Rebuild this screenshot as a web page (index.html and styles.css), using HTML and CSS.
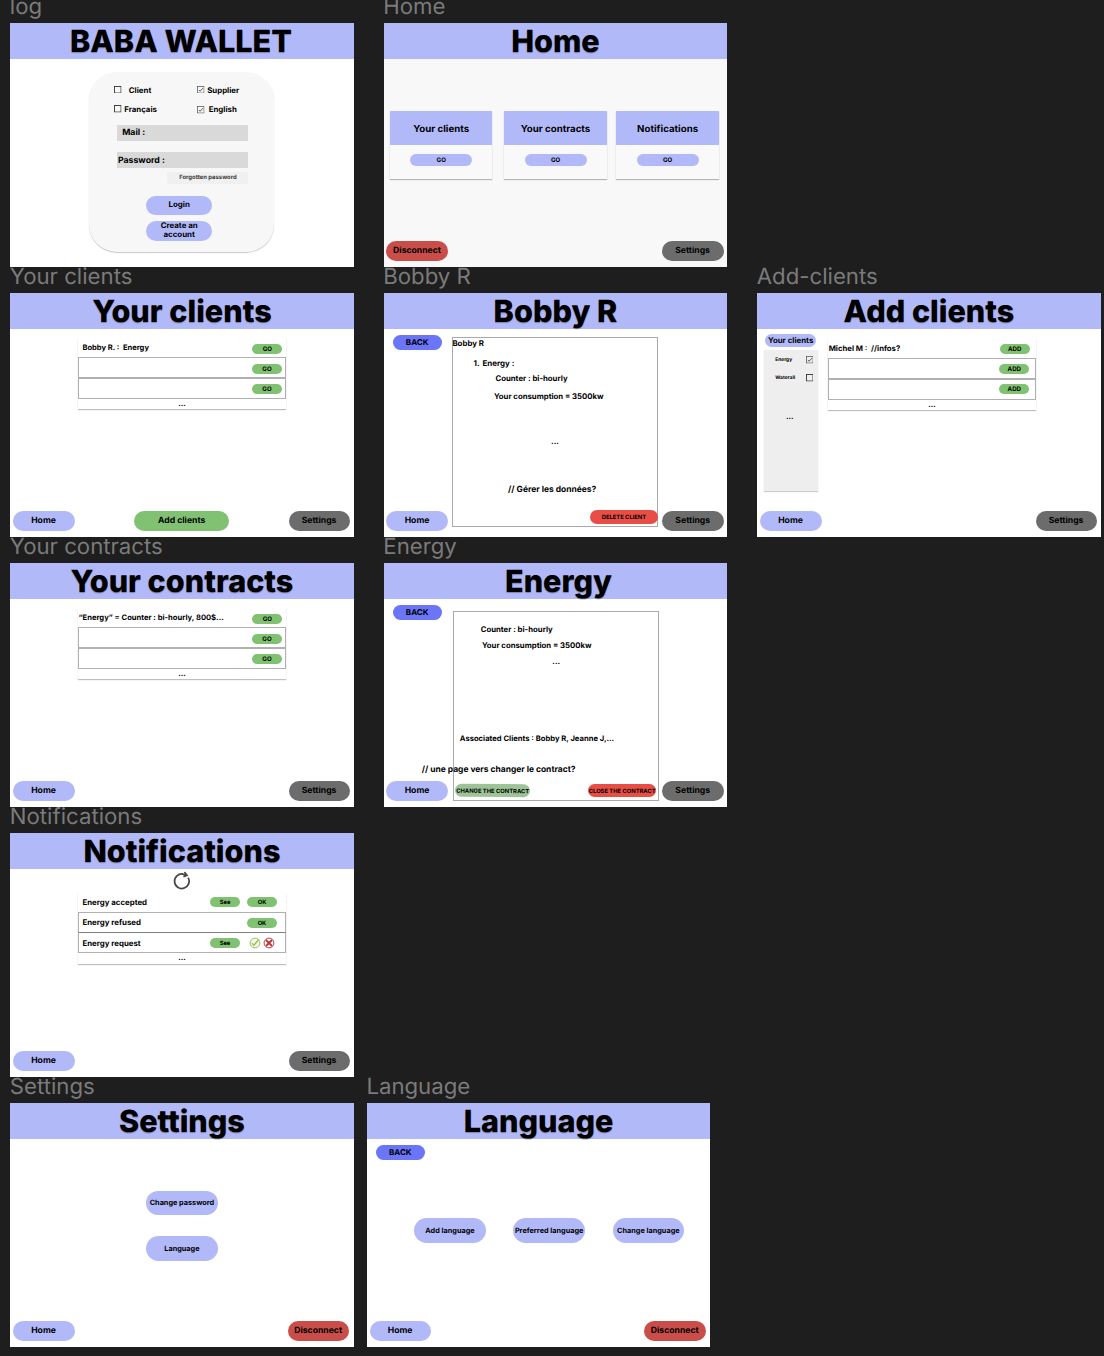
FILE: index.html
```html
<!DOCTYPE html>
<html lang="en">
<head>
<meta charset="utf-8">
<title>Baba Wallet</title>
<link rel="stylesheet" href="styles.css">
</head>
<body>
<svg width="0" height="0" class="defs">
  <symbol id="box" viewBox="0 0 8 8"><rect x=".5" y=".5" width="7" height="7" fill="none" stroke="#333" stroke-width=".95"/></symbol>
  <symbol id="boxed" viewBox="0 0 8 8"><rect x=".5" y=".5" width="7" height="7" fill="none" stroke="#555" stroke-width=".8"/><path d="M1.9 4.2 3.3 5.6 6.2 2.4" fill="none" stroke="#222" stroke-width=".8"/></symbol>
</svg>
<main class="board">
  <div class="row">
    <section class="screen">
      <h2 class="label">log</h2>
      <div class="frame">
        <h1 class="title shift-left">BABA WALLET</h1>
        <form class="login">
          <div class="checks">
            <svg class="check"><use href="#box"/></svg><span class="client">Client</span>
            <svg class="check"><use href="#boxed"/></svg><span>Supplier</span>
            <svg class="check"><use href="#box"/></svg><span>Français</span>
            <svg class="check low"><use href="#boxed"/></svg><span class="english">English</span>
          </div>
          <div class="field mail">Mail :</div>
          <div class="field password">Password :</div>
          <div class="forgot">Forgotten password</div>
          <div class="pill signin">Login</div>
          <div class="pill create">Create an<br>account</div>
        </form>
      </div>
    </section>
    <section class="screen">
      <h2 class="label">Home</h2>
      <div class="frame soft">
        <h1 class="title">Home</h1>
        <div class="cards">
          <div class="card"><h3>Your clients</h3><div class="pill card-go">GO</div></div>
          <div class="card"><h3>Your contracts</h3><div class="pill card-go">GO</div></div>
          <div class="card"><h3>Notifications</h3><div class="pill card-go">GO</div></div>
        </div>
        <footer class="foot"><div class="pill nav red">Disconnect</div><div class="pill nav grey">Settings</div></footer>
      </div>
    </section>
  </div>

  <div class="row">
    <section class="screen">
      <h2 class="label">Your clients</h2>
      <div class="frame">
        <h1 class="title">Your clients</h1>
        <div class="list">
          <div class="item first"><span class="name">Bobby R. :&nbsp; Energy</span><div class="pill mini">GO</div></div>
          <div class="item lined"><div class="pill mini">GO</div></div>
          <div class="item lined"><div class="pill mini">GO</div></div>
          <div class="more">...</div>
        </div>
        <footer class="foot"><div class="pill nav">Home</div><div class="pill nav green">Add clients</div><div class="pill nav grey">Settings</div></footer>
      </div>
    </section>
    <section class="screen">
      <h2 class="label">Bobby R</h2>
      <div class="frame">
        <h1 class="title">Bobby R</h1>
        <div class="detail">
          <div class="side"><div class="pill back">BACK</div><div class="pill nav">Home</div></div>
          <div class="panel client-panel">
            <p class="text who">Bobby R</p>
            <p class="text topic"><span>1.</span>Energy :</p>
            <p class="text counter">Counter : bi-hourly</p>
            <p class="text usage">Your consumption = 3500kw</p>
            <p class="text dots">...</p>
            <p class="text note">// Gérer les données?</p>
            <div class="pill action delete">DELETE CLIENT</div>
          </div>
          <div class="side end"><div class="pill nav grey">Settings</div></div>
        </div>
      </div>
    </section>
    <section class="screen">
      <h2 class="label">Add-clients</h2>
      <div class="frame">
        <h1 class="title">Add clients</h1>
        <div class="browse">
          <aside class="filters">
            <div class="pill tab">Your clients</div>
            <div class="filter-box">
              <div class="filter">Energy<svg class="check"><use href="#boxed"/></svg></div>
              <div class="filter">Waterall<svg class="check"><use href="#box"/></svg></div>
              <div class="filter-more">...</div>
            </div>
          </aside>
          <div class="list add-list">
            <div class="item first"><span class="name">Michel M :&nbsp; //infos?</span><div class="pill mini">ADD</div></div>
            <div class="item lined"><div class="pill mini">ADD</div></div>
            <div class="item lined"><div class="pill mini">ADD</div></div>
            <div class="more">...</div>
          </div>
        </div>
        <footer class="foot"><div class="pill nav">Home</div><div class="pill nav grey">Settings</div></footer>
      </div>
    </section>
  </div>

  <div class="row">
    <section class="screen">
      <h2 class="label">Your contracts</h2>
      <div class="frame">
        <h1 class="title">Your contracts</h1>
        <div class="list contracts">
          <div class="item first"><span class="name">“Energy” = Counter : bi-hourly, 800$...</span><div class="pill mini">GO</div></div>
          <div class="item lined"><div class="pill mini">GO</div></div>
          <div class="item lined"><div class="pill mini">GO</div></div>
          <div class="more">...</div>
        </div>
        <footer class="foot"><div class="pill nav">Home</div><div class="pill nav grey">Settings</div></footer>
      </div>
    </section>
    <section class="screen">
      <h2 class="label">Energy</h2>
      <div class="frame">
        <h1 class="title shift-right">Energy</h1>
        <div class="detail">
          <div class="side"><div class="pill back">BACK</div><div class="pill nav">Home</div></div>
          <div class="panel contract-panel">
            <p class="text counter">Counter : bi-hourly</p>
            <p class="text usage">Your consumption = 3500kw</p>
            <p class="text dots">...</p>
            <p class="text clients">Associated Clients : Bobby R, Jeanne J,...</p>
            <p class="text note">// une page vers changer le contract?</p>
            <div class="actions">
              <div class="pill action change">CHANGE THE CONTRACT</div>
              <div class="pill action close">CLOSE THE CONTRACT</div>
            </div>
          </div>
          <div class="side end"><div class="pill nav grey">Settings</div></div>
        </div>
      </div>
    </section>
  </div>

  <div class="row">
    <section class="screen">
      <h2 class="label">Notifications</h2>
      <div class="frame">
        <h1 class="title">Notifications</h1>
        <svg class="refresh" viewBox="0 0 20 20"><path d="M11 3A7.3 7.3 0 1 0 16.2 6.6" fill="none" stroke="#484848" stroke-width="1.8"/><path d="M10.2 3 14.6 4.2M12.4.9 15 4.4 11.4 5.6" fill="none" stroke="#484848" stroke-width="1.7"/></svg>
        <div class="list notices">
          <div class="item first"><span class="name">Energy accepted</span><div class="pill mini">See</div><div class="pill mini">OK</div></div>
          <div class="item lined"><span class="name">Energy refused</span><div class="pill mini">OK</div></div>
          <div class="item lined"><span class="name">Energy request</span><div class="pill mini">See</div>
            <div class="verdict">
              <svg viewBox="0 0 12 12"><circle cx="6" cy="6" r="4.9" fill="#f5f9ea" stroke="#a3b86c" stroke-width="1"/><path d="M2.9 6.3 4.9 8.3 9.8 2.4" fill="none" stroke="#8fc63d" stroke-width="1.4"/></svg>
              <svg viewBox="0 0 12 12"><circle cx="6" cy="6" r="4.9" fill="#fff" stroke="#a94a4a" stroke-width="1"/><path d="M3 3 9 9M9 3 3 9" fill="none" stroke="#c62f35" stroke-width="1.8"/></svg>
            </div>
          </div>
          <div class="more">...</div>
        </div>
        <footer class="foot"><div class="pill nav">Home</div><div class="pill nav grey">Settings</div></footer>
      </div>
    </section>
  </div>

  <div class="row narrow">
    <section class="screen">
      <h2 class="label">Settings</h2>
      <div class="frame">
        <h1 class="title">Settings</h1>
        <div class="stack"><div class="pill option">Change password</div><div class="pill option">Language</div></div>
        <footer class="foot out"><div class="pill nav">Home</div><div class="pill nav red">Disconnect</div></footer>
      </div>
    </section>
    <section class="screen">
      <h2 class="label">Language</h2>
      <div class="frame">
        <h1 class="title">Language</h1>
        <div class="pill back">BACK</div>
        <div class="options"><div class="pill option">Add language</div><div class="pill option">Preferred language</div><div class="pill option">Change language</div></div>
        <footer class="foot out"><div class="pill nav">Home</div><div class="pill nav red">Disconnect</div></footer>
      </div>
    </section>
  </div>
</main>
</body>
</html>
```
FILE: styles.css
```css
* { box-sizing: border-box; margin: 0; padding: 0; }

html { background: #1e1e1e; }

body {
  height: 1356px;
  overflow: hidden;
  background: #1e1e1e;
  color: #000;
  font-family: Inter, "Liberation Sans", sans-serif;
  font-weight: 700;
  text-rendering: geometricPrecision;
}

svg { display: block; flex: none; }
.defs { display: none; }

/* canvas */
.board { margin-top: -3px; padding-left: 10.2px; }
.row { display: flex; gap: 30px; height: 270px; }
.row.narrow { gap: 13.1px; }
.screen { width: 343.5px; flex: none; }
.label {
  height: 26px;
  margin-left: -.4px;
  font-size: 22.2px;
  font-weight: 400;
  line-height: 20px;
  color: #7b7b7b;
  white-space: nowrap;
}
.frame {
  display: flex;
  flex-direction: column;
  height: 244px;
  background: #fff;
}
.frame.soft { background: #f8f8f8; }
.title {
  height: 36px;
  flex: none;
  background: #b2b9f8;
  font-size: 30.6px;
  font-weight: 800;
  line-height: 38px;
  text-align: center;
  text-shadow: 0 1px 1px rgba(0, 0, 0, .3);
}
.title.shift-left { padding-right: 2px; }
.title.shift-right { padding-left: 6px; }

/* buttons */
.pill {
  display: flex;
  align-items: center;
  justify-content: center;
  flex: none;
  border-radius: 20px;
  background: #b2b9f8;
  text-align: center;
  white-space: nowrap;
}
.nav { width: 61.8px; height: 20px; padding: 0 .7px 1px 0; font-size: 8.65px; line-height: 10px; }
.back { width: 49px; height: 15px; margin: 6px 0 0 9px; padding-bottom: 1px; background: #6a75f8; font-size: 8px; line-height: 10px; }
.red { background: #c94d48; }
.grey { background: #6c6c6c; }
.nav.green { width: 95px; padding-right: 0; background: #80c272; }

.foot {
  display: flex;
  justify-content: space-between;
  margin-top: auto;
  padding: 0 3.4px 6px 2.8px;
}
.foot.out { padding-right: 4.3px; }

/* login */
.login {
  display: flex;
  flex-direction: column;
  width: 185px;
  height: 180px;
  margin: 13px 0 0 79px;
  border-radius: 28px;
  background: #f7f7f7;
  box-shadow: 0 1px 1px rgba(0, 0, 0, .22);
}
.checks {
  display: grid;
  grid-template-columns: 10px 73px 10px 50px;
  grid-auto-rows: 19.3px;
  align-items: center;
  height: 39px;
  margin: 8px 0 0 25px;
  font-size: 7.85px;
  line-height: 10px;
}
.check { width: 7.5px; height: 7.5px; }
.check.low { margin-top: 2.5px; }
.client { padding-left: 4.6px; }
.english { padding-left: 1.5px; }
.field {
  width: 131px;
  margin-left: 28px;
  background: #d9d9d9;
  font-size: 8.75px;
}
.mail { height: 16px; margin-top: 6px; padding-left: 5px; line-height: 16.5px; }
.password { height: 15.5px; margin-top: 11.3px; padding-left: .7px; line-height: 18px; }
.forgot {
  width: 81px;
  height: 11.3px;
  margin: 4.7px 0 0 77.5px;
  padding: 1px 0 0 1.5px;
  background: #f0f0f0;
  color: #3a3a3a;
  font-size: 5.92px;
  line-height: 10px;
  text-align: center;
}
.signin, .create { width: 65.4px; margin-left: 57.3px; font-size: 7.9px; line-height: 9.2px; }
.signin { height: 18.7px; margin-top: 12.3px; padding-bottom: 1.5px; }
.create { height: 20.3px; margin-top: 6px; padding-bottom: 2.4px; }

/* home cards */
.cards { display: flex; margin: 51.7px 0 0 6.4px; }
.card {
  width: 102.3px;
  height: 68.5px;
  background: #f9f9f9;
  box-shadow: 0 1px 1px rgba(0, 0, 0, .27);
}
.card:nth-child(2) { margin: 0 9.8px 0 12px; }
.card h3 {
  height: 34.3px;
  padding-top: 1px;
  background: #b2b9f8;
  font-size: 9.7px;
  line-height: 35px;
  text-align: center;
}
.card-go { width: 62px; height: 11.4px; margin: 9.2px auto 0; padding-top: 1.6px; font-size: 6.1px; line-height: 10px; }

/* lists */
.list {
  width: 207.2px;
  height: 71px;
  margin: 9px 0 0 68.3px;
  background: #fff;
  box-shadow: 0 1px 1px rgba(0, 0, 0, .25);
  clip-path: inset(0 -2px -3px -2px);
}
.item {
  display: flex;
  align-items: flex-start;
  justify-content: flex-end;
  gap: 7px;
  height: 21px;
  padding: 6px 2.7px 0 3px;
}
.item.first { height: 19px; padding: 6px 3.3px 0 4px; }
.item.lined { border: 1px solid #b0b0b0; }
.item.lined + .item.lined { padding-top: 5px; }
.name { margin: -1.2px auto 0 0; font-size: 7.56px; line-height: 10px; white-space: nowrap; }
.mini { width: 30px; height: 10px; padding-top: 1px; background: #80c272; font-size: 6.1px; line-height: 10px; }
.more { padding-top: 1px; font-size: 7.6px; line-height: 8px; text-align: center; }

.contracts .first { padding-left: 0; }
.contracts .name { margin-top: -1.2px; font-size: 7.6px; }

.browse { display: flex; }
.filters { width: 61px; padding: 5px 0 0 6.8px; }
.tab { width: 51.4px; height: 12.7px; margin-left: 1px; font-size: 7.87px; line-height: 10px; }
.filter-box {
  height: 141px;
  margin-top: 3.5px;
  padding: 5px 5px 0 11.2px;
  background: #eee;
  box-shadow: 0 1px 1px rgba(0, 0, 0, .2);
}
.filter { display: flex; align-items: center; justify-content: space-between; height: 10px; margin-bottom: 8px; font-size: 4.95px; line-height: 9px; }
.filter-more { margin-top: 28.5px; padding-right: 9px; font-size: 7.6px; line-height: 10px; text-align: center; }
.add-list { height: 71px; margin: 10px 0 0 10.3px; }
.add-list .item { padding: 5px 5.4px 0 0; }
.add-list .item.first { padding: 5px 6px 0 .2px; }
.add-list .item.lined + .item.lined { padding-top: 4px; }
.add-list .name { margin-top: .3px; font-size: 7.72px; }

.refresh { width: 20px; height: 20px; margin: 1.7px 0 0 162px; }
.notices { margin-top: 2.3px; height: 71px; }
.notices .item { padding: 5px 7.7px 0 3px; }
.notices .item.first { padding: 4px 8.5px 0 4px; }
.notices .item.lined { height: 21px; border-bottom-color: #808080; }
.notices .item.lined + .item.lined { height: 20px; padding-top: 5px; border-top: 0; border-bottom-color: #b0b0b0; }
.notices .name { margin-top: -.3px; font-size: 7.83px; }
.notices .lined:nth-child(2) .name { margin-top: -1px; }
.notices .mini { padding-top: 1.8px; font-size: 5.8px; }
.verdict { display: flex; gap: 2.3px; width: 30px; height: 10px; padding-left: 1.7px; }
.verdict svg { width: 12px; height: 12px; margin-top: -1px; }

/* detail pages */
.detail { display: flex; flex: 1; }
.side { display: flex; flex-direction: column; justify-content: space-between; width: 68px; padding: 0 0 6px 2.8px; flex: none; }
.side .back { margin-left: 6.2px; }
.side.end { justify-content: flex-end; margin-left: auto; width: 65px; padding-left: 0; }
.panel { width: 206px; height: 190px; flex: none; border: 1px solid #aaa; }
.client-panel { margin-top: 8px; margin-left: .3px; }
.contract-panel { margin-top: 12px; margin-left: 1.5px; }
.text { font-size: 7.75px; line-height: 10px; white-space: nowrap; }
.who { margin-left: -.6px; font-size: 7.88px; }
.topic { display: flex; margin: 10.3px 0 0 20.5px; font-size: 7.95px; }
.topic span { width: 9px; }
.client-panel .counter { margin: 4.7px 0 0 42.5px; }
.client-panel .usage { margin: 8.5px 0 0 41px; }
.client-panel .dots { margin-top: 34.5px; text-align: center; }
.client-panel .note { margin: 39px 0 0 55px; font-size: 8.46px; }
.action { height: 13.3px; font-size: 5.82px; line-height: 10px; background: #e84e46; }
.delete { width: 68px; margin: 15.3px -1px 0 auto; padding-top: 2px; }
.contract-panel .counter { margin: 12px 0 0 26.5px; }
.contract-panel .usage { margin: 6px 0 0 27.8px; }
.contract-panel .dots { margin-top: 6px; text-align: center; }
.clients { margin: 68px 0 0 5.6px; font-size: 7.64px; }
.contract-panel .note { margin: 21px 0 0 -32.5px; font-size: 8.45px; }
.actions { display: flex; justify-content: space-between; padding: 0 2px 0 .7px; margin-top: 8.3px; }
.change { width: 75.4px; height: 12.7px; margin-top: .3px; padding-top: 2.6px; background: #9cc497; transform: rotate(.4deg); }
.close { width: 68px; margin-top: .7px; padding-top: 1.8px; }

/* settings */
.option { width: 71.4px; height: 24.6px; padding-top: .7px; font-size: 7.3px; line-height: 10px; }
.stack { display: flex; flex-direction: column; align-items: center; gap: 21px; margin-top: 51.5px; }
.options { display: flex; gap: 27.8px; margin: 58px 0 0 47.5px; }
```
